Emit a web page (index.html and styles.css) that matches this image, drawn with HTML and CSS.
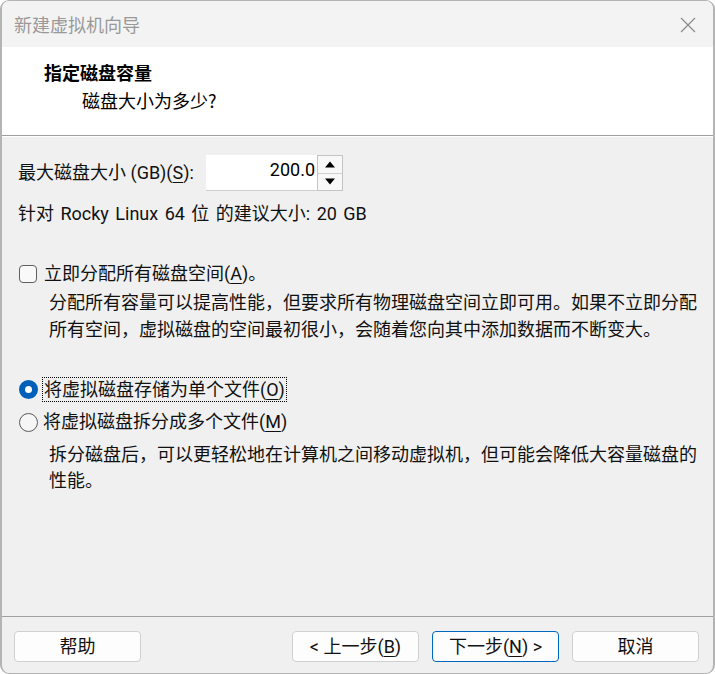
FILE: index.html
```html
<!DOCTYPE html>
<html lang="zh-CN">
<head>
<meta charset="utf-8">
<title>新建虚拟机向导</title>
<link rel="stylesheet" href="styles.css">
</head>
<body>
<div class="window">
  <div class="titlebar">
    <span class="title">新建虚拟机向导</span>
    <svg class="close" width="16" height="16" viewBox="0 0 16 16"><path d="M1 1 L15 15 M15 1 L1 15" stroke="#8a8a8a" stroke-width="1.2" fill="none"/></svg>
  </div>
  <div class="header">
    <div class="h-title">指定磁盘容量</div>
    <div class="h-sub">磁盘大小为多少?</div>
  </div>
  <div class="content">
    <div class="size-row">
      <span class="size-label">最大磁盘大小 (GB)(<u>S</u>):</span>
      <div class="spin">
        <div class="spin-input">200.0</div>
        <div class="spin-btns">
          <div class="spin-btn"><svg width="10" height="7" viewBox="0 0 10 7"><path d="M0 6.5 L5 0.5 L10 6.5 Z" fill="#000"/></svg></div>
          <div class="spin-btn"><svg width="10" height="7" viewBox="0 0 10 7"><path d="M0 0.5 L5 6.5 L10 0.5 Z" fill="#000"/></svg></div>
        </div>
      </div>
    </div>
    <div class="recommend">针对 Rocky Linux 64 位 的建议大小: 20 GB</div>

    <div class="check-row">
      <span class="checkbox"></span>
      <span class="opt-label">立即分配所有磁盘空间(<u>A</u>)。</span>
    </div>
    <p class="desc">分配所有容量可以提高性能，但要求所有物理磁盘空间立即可用。如果不立即分配<br>所有空间，虚拟磁盘的空间最初很小，会随着您向其中添加数据而不断变大。</p>

    <div class="radio-row first">
      <span class="radio checked"></span>
      <span class="opt-label focus">将虚拟磁盘存储为单个文件(<u>O</u>)</span>
    </div>
    <div class="radio-row second">
      <span class="radio"></span>
      <span class="opt-label">将虚拟磁盘拆分成多个文件(<u>M</u>)</span>
    </div>
    <p class="desc desc2">拆分磁盘后，可以更轻松地在计算机之间移动虚拟机，但可能会降低大容量磁盘的<br>性能。</p>
  </div>
  <div class="footer">
    <button class="btn">帮助</button>
    <div class="btn-group">
      <button class="btn">&lt; 上一步(<u>B</u>)</button>
      <button class="btn primary">下一步(<u>N</u>) &gt;</button>
      <button class="btn">取消</button>
    </div>
  </div>
</div>
</body>
</html>
```
FILE: styles.css
```css
* { box-sizing: border-box; }
html, body {
  margin: 0;
  padding: 0;
  background: #ffffff;
}
body {
  font-family: "Roboto", "Noto Sans CJK SC", sans-serif;
  font-size: 18px;
  color: #111;
}
.window {
  width: 715px;
  height: 674px;
  border: 1px solid #b4b4b4;
  border-left-width: 2px;
  border-right-width: 2px;
  border-radius: 9px;
  overflow: hidden;
  display: flex;
  flex-direction: column;
  background: #f0f0f0;
}
.titlebar {
  height: 46px;
  background: #f3f3f3;
  display: flex;
  align-items: center;
  justify-content: space-between;
  padding: 0 17px 0 12px;
  flex-shrink: 0;
}
.title {
  font-family: "Noto Sans CJK SC", sans-serif;
  font-size: 18px;
  color: #999999;
  line-height: 24px;
}
.close { display: block; margin-top: 1px; }
.header {
  height: 89px;
  background: #ffffff;
  border-bottom: 1px solid #a0a0a0;
  padding: 13px 0 0 42px;
  flex-shrink: 0;
}
.h-title {
  font-family: "Noto Sans CJK SC", serif;
  font-weight: 700;
  font-size: 18px;
  line-height: 24px;
  color: #000;
}
.h-sub {
  font-family: "Noto Sans CJK SC", serif;
  font-size: 18px;
  line-height: 24px;
  margin-top: 4px;
  padding-left: 38px;
  color: #000;
}
.content {
  flex: 1;
  padding: 18px 0 0 16px;
  border-top: 1px solid #ffffff;
}
.size-row {
  display: flex;
  align-items: center;
  height: 36px;
}
.size-label {
  line-height: 24px;
  width: 188px;
  white-space: nowrap;
}
u { text-decoration-thickness: 1px; text-underline-offset: 3px; }
.spin {
  display: flex;
  height: 36px;
}
.spin-input {
  width: 111px;
  height: 36px;
  background: #fff;
  border-bottom: 1px solid #cfcfcf;
  text-align: right;
  padding: 0 2px 0 0;
  line-height: 30px;
  color: #000;
}
.spin-btns {
  width: 26px;
  display: flex;
  flex-direction: column;
  border: 1px solid #c4c4c4;
  background: #f8f8f8;
}
.spin-btn {
  flex: 1;
  display: flex;
  align-items: center;
  justify-content: center;
}
.spin-btn + .spin-btn { border-top: 1px solid #d0d0d0; }
.recommend {
  margin-top: 11px;
  line-height: 24px;
  white-space: nowrap;
  word-spacing: 2px;
}
.check-row, .radio-row {
  display: flex;
  align-items: center;
  height: 24px;
}
.check-row { margin-top: 36px; }
.checkbox {
  width: 18px;
  height: 18px;
  border: 1px solid #5f5f5f;
  border-radius: 4px;
  background: #f9f9f9;
  margin-left: 1px;
  margin-right: 7px;
}
.opt-label {
  line-height: 22px;
  white-space: nowrap;
}
.desc {
  margin: 3px 0 0 31px;
  line-height: 27px;
  white-space: nowrap;
}
.radio-row.first { margin-top: 34px; }
.radio-row.second { margin-top: 9px; }
.radio {
  width: 19px;
  height: 19px;
  border-radius: 50%;
  border: 1px solid #5a5a5a;
  background: #f6f6f6;
  margin-left: 1px;
  margin-right: 5px;
}
.radio.checked {
  border: 6px solid #005fb8;
  background: #ffffff;
}
.focus {
  outline: 1px dotted #000;
  outline-offset: 0;
  padding: 0 1px;
  line-height: 23px;
}
.desc2 {
  margin-top: 8px;
  line-height: 26px;
}
.footer {
  height: 57px;
  border-top: 1px solid #a0a0a0;
  padding: 14px 14px 0 12px;
  display: flex;
  justify-content: space-between;
  align-items: flex-start;
  flex-shrink: 0;
}
.btn-group {
  display: flex;
  gap: 13px;
}
.btn {
  width: 127px;
  height: 31px;
  background: #fdfdfd;
  border: 1px solid #d0d0d0;
  border-radius: 4px;
  font-family: "Roboto", "Noto Sans CJK SC", sans-serif;
  font-size: 18px;
  color: #111;
  padding: 0;
  line-height: 27px;
}
.btn.primary {
  border-color: #0067c0;
}
```
